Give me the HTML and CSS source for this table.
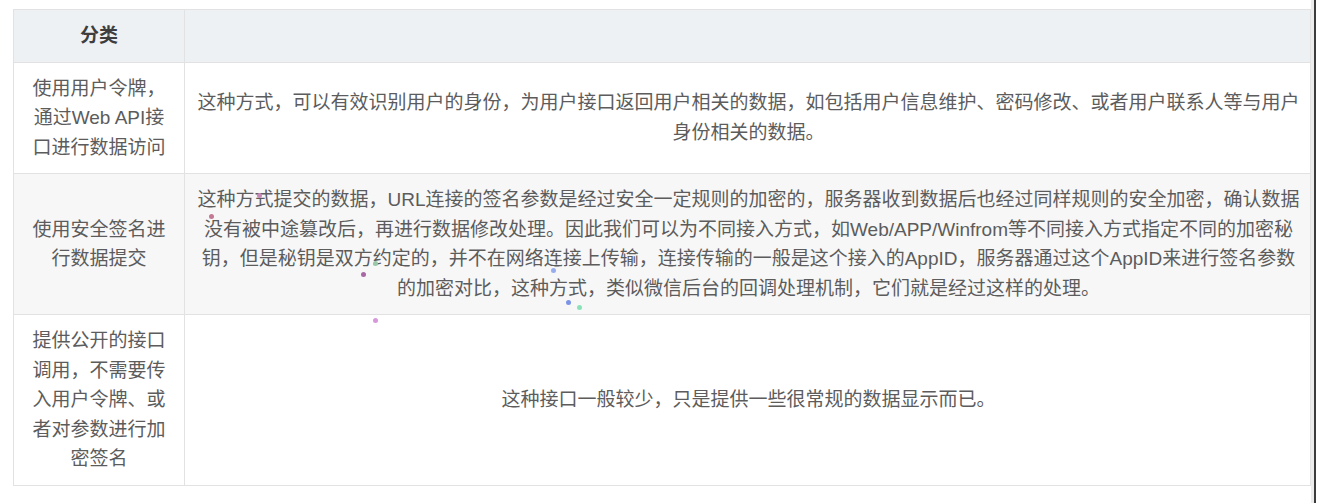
FILE: index.html
```html
<!DOCTYPE html>
<html>
	<head>
		<meta charset="UTF-8">
		<title>接口分类</title>
		<link rel="stylesheet" href="styles.css">
	</head>
	<body>
		<div class="frame">
			<div class="page">
				<table class="api_table">
					<thead>
						<tr>
							<th class="type_col">分类</th>
							<th></th>
						</tr>
					</thead>
					<tbody>
						<tr>
							<td class="type_col">使用用户令牌，通过Web API接口进行数据访问</td>
							<td class="desc">这种方式，可以有效识别用户的身份，为用户接口返回用户相关的数据，如包括用户信息维护、密码修改、或者用户联系人等与用户<br>身份相关的数据。</td>
						</tr>
						<tr class="alt">
							<td class="type_col">使用安全签名进行数据提交</td>
							<td class="desc">这种方式提交的数据，URL连接的签名参数是经过安全一定规则的加密的，服务器收到数据后也经过同样规则的安全加密，确认数据<br>没有被中途篡改后，再进行数据修改处理。因此我们可以为不同接入方式，如Web/APP/Winfrom等不同接入方式指定不同的加密秘<br>钥，但是秘钥是双方约定的，并不在网络连接上传输，连接传输的一般是这个接入的AppID，服务器通过这个AppID来进行签名参数<br>的加密对比，这种方式，类似微信后台的回调处理机制，它们就是经过这样的处理。</td>
						</tr>
						<tr>
							<td class="type_col">提供公开的接口调用，不需要传入用户令牌、或者对参数进行加密签名</td>
							<td class="desc">这种接口一般较少，只是提供一些很常规的数据显示而已。</td>
						</tr>
					</tbody>
				</table>
			</div>

			<!-- 鼠标拖尾留下的小圆点 -->
			<span class="dot dot_1"></span>
			<span class="dot dot_2"></span>
			<span class="dot dot_3"></span>
			<span class="dot dot_4"></span>
			<span class="dot dot_5"></span>
			<span class="dot dot_6"></span>
			<span class="dot dot_7"></span>
			<span class="dot dot_8"></span>
		</div>
	</body>
</html>
```

FILE: styles.css
```css
* {
	margin: 0;
	padding: 0;
}
body {
	background-color: #fff;
	font-family: "Liberation Sans", "Noto Sans CJK SC", sans-serif;
	color: #5c5c5c;
}

.frame {
	width: 1316px;
	height: 503px;
	position: relative;
	border-right: 2px solid #3c3c3c;
	box-sizing: border-box;
}
.page {
	width: 1314px;
	height: 100%;
	padding: 9px 0 0 13px;
	border-right: 3px solid #ececec;
	box-sizing: border-box;
}

.api_table {
	width: 1298px;
	border-collapse: collapse;
	font-size: 19px;
	line-height: 29.5px;
}
.api_table th,
.api_table td {
	border: 1px solid #e2e2e2;
	padding: 11px 12px;
	text-align: center;
	vertical-align: middle;
}
.api_table th {
	background-color: #eef1f4;
	color: #3e3e3e;
	font-weight: bold;
}
.api_table .type_col {
	width: 146px;
}
.api_table .desc {
	padding: 11px 6px 11px 8px;
	white-space: nowrap;
}
.api_table .alt td {
	background-color: #f7f7f7;
}

.dot {
	position: absolute;
	width: 5px;
	height: 5px;
	border-radius: 50%;
}
.dot_1 {
	left: 257px;
	top: 193px;
	background-color: #c888b8;
}
.dot_2 {
	left: 209px;
	top: 214px;
	background-color: #c47894;
}
.dot_3 {
	left: 361px;
	top: 272px;
	background-color: #a868a4;
}
.dot_4 {
	left: 373px;
	top: 318px;
	background-color: #d898dc;
}
.dot_5 {
	left: 373px;
	top: 261px;
	background-color: #98c8a8;
}
.dot_6 {
	left: 551px;
	top: 268px;
	background-color: #98acf0;
}
.dot_7 {
	left: 566px;
	top: 300px;
	background-color: #7c94e4;
}
.dot_8 {
	left: 577px;
	top: 305px;
	background-color: #88e4b8;
}
```
